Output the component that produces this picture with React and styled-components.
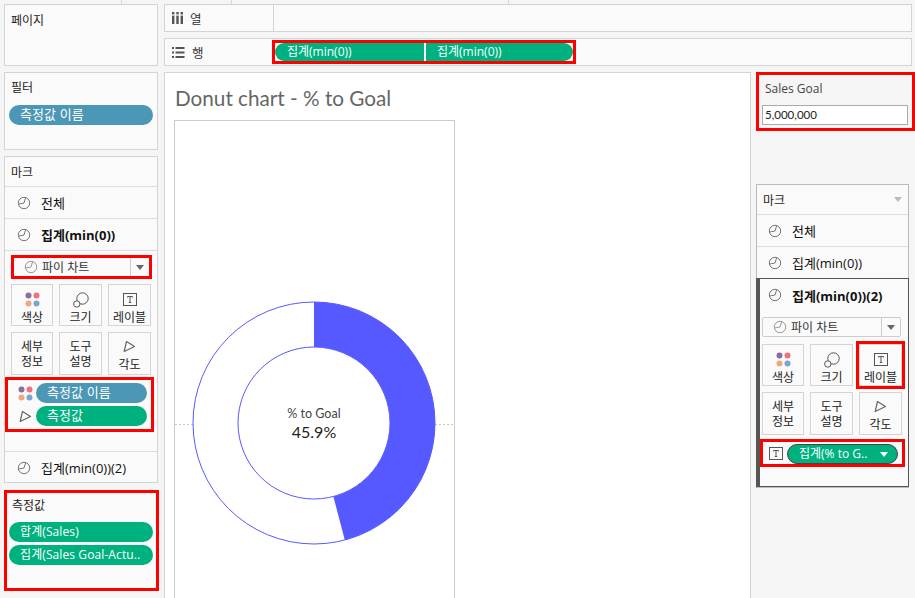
import React from 'react';
import styled, { createGlobalStyle } from 'styled-components';

const GlobalStyle = createGlobalStyle`
  html, body {
    margin: 0;
    height: 598px;
    overflow: hidden;
    background: #f5f5f5;
    font-family: "Open Sans", "Noto Sans CJK KR", sans-serif;
    color: #222;
  }
  * { box-sizing: border-box; }
`;

const Page = styled.div`
  width: 915px;
  height: 598px;
  overflow: hidden;
`;

const TopStrip = styled.div`
  height: 4px;
  display: grid;
  grid-template-columns: 122px 110px 277px 1fr;
`;

const Tick = styled.div`
  border-right: 1px solid #d9d9d9;
`;

const Workspace = styled.div`
  display: flex;
  gap: 5px;
  padding-left: 4px;
`;

const LeftColumn = styled.div`
  width: 155px;
  flex: none;
  display: flex;
  flex-direction: column;
`;

const Card = styled.div`
  width: 154px;
  background: #fafafa;
  border: 1px solid #d4d4d4;
  height: ${p => p.$height}px;
  margin-bottom: ${p => p.$gap || 0}px;
  padding: ${p => p.$padding || '0'};
`;

const MeasureCard = styled.div`
  background: #fafafa;
  border: 3px solid #f00;
  height: 101px;
  margin-top: 7px;
  padding: 5px 3px 0 2px;
`;

const CardTitle = styled.div`
  font-size: 12px;
  line-height: 16px;
  padding-left: ${p => p.$indent || 0}px;
  margin-bottom: ${p => p.$gap || 0}px;
`;

const Pill = styled.div`
  height: 20px;
  border-radius: 10px;
  background: ${p => (p.$blue ? '#4b97b5' : '#00b180')};
  color: #fff;
  font-size: ${p => (p.$korean ? 13 : 12)}px;
  line-height: 19px;
  padding-left: 11px;
  white-space: nowrap;
  overflow: hidden;
  margin-bottom: 3px;
  flex: 1;
  letter-spacing: 0.1px;
`;

const MarksHeader = styled.div`
  height: ${p => p.$height}px;
  padding: 0 6px;
  display: flex;
  align-items: center;
  justify-content: space-between;
  font-size: 12px;
`;

const Caret = styled.span`
  width: 0;
  height: 0;
  border-left: 4px solid transparent;
  border-right: 4px solid transparent;
  border-top: 5px solid ${p => p.$color || '#666'};
`;

const MarkRow = styled.div`
  height: 32px;
  border-top: ${p => (p.$flush ? 'none' : '1px solid #ddd')};
  display: flex;
  align-items: center;
  gap: 10px;
  padding-left: ${p => p.$inset || 12}px;
  font-size: 13px;
  font-weight: ${p => (p.$bold ? 700 : 400)};
  color: #111;
`;

const MarkBody = styled.div`
  border-top: 1px solid #ddd;
  padding: 4px 5px 0 6px;
`;

const SelectedBlock = styled.div`
  border: 1px solid #555;
  border-left-width: 4px;
  height: 209px;
  margin: 0 -1px -1px -1px;
`;

const SelectedBody = styled.div`
  padding: 6px 7px 0 2px;
`;

const SelectBox = styled.div`
  height: ${p => (p.$marked ? 24 : 20)}px;
  display: flex;
  align-items: center;
  background: #fafafa;
  border: ${p => (p.$marked ? '3px solid #f00' : '1px solid #ccc')};
  border-radius: ${p => (p.$marked ? 0 : 2)}px;
  font-size: 12px;
  color: #333;
`;

const SelectValue = styled.div`
  flex: 1;
  display: flex;
  align-items: center;
  gap: 4px;
  padding-left: 10px;
`;

const SelectArrow = styled.div`
  width: 19px;
  height: 100%;
  border-left: 1px solid #ccc;
  display: flex;
  align-items: center;
  justify-content: center;
`;

const ButtonGrid = styled.div`
  display: grid;
  grid-template-columns: 42px 43px 43px;
  grid-template-rows: 42px 43px;
  column-gap: 6px;
  row-gap: 6px;
  margin-top: ${p => p.$top}px;
`;

const MarkButton = styled.div`
  border: 1px solid #d4d4d4;
  outline: ${p => (p.$marked ? '3px solid #f00' : 'none')};
  display: flex;
  flex-direction: column;
  align-items: center;
  justify-content: ${p => (p.$center ? 'center' : 'flex-end')};
  padding-bottom: ${p => (p.$lift ? 2 : 0)}px;
  font-size: 12px;
  line-height: 15px;
  text-align: center;
  color: #222;
`;

const IconSlot = styled.div`
  height: 21px;
  display: flex;
  align-items: center;
  justify-content: center;
`;

const PillBox = styled.div`
  border: 3px solid #f00;
  margin: ${p => p.$margin};
  padding: ${p => p.$padding};
`;

const PillLine = styled.div`
  display: flex;
  align-items: center;
  gap: 2px;
`;

const LineIcon = styled.div`
  width: 18px;
  display: flex;
  justify-content: center;
  margin-bottom: ${p => (p.$flat ? 0 : 3)}px;
`;

const LabelPill = styled.div`
  flex: 1;
  height: 20px;
  border-radius: 10px;
  border: 1px solid #444;
  background: #00b180;
  color: #fff;
  font-size: 12px;
  line-height: 18px;
  padding: 0 9px 0 11px;
  display: flex;
  align-items: center;
  justify-content: space-between;
  white-space: nowrap;
`;

const MainColumn = styled.div`
  width: 751px;
  flex: none;
`;

const Shelf = styled.div`
  width: 748px;
  height: 28px;
  display: flex;
  background: #fafafa;
  border: 1px solid #d4d4d4;
  margin-bottom: 6px;
`;

const ShelfLabel = styled.div`
  width: 109px;
  border-right: 1px solid #d4d4d4;
  display: flex;
  align-items: center;
  gap: 7px;
  padding-left: 7px;
  font-size: 12.5px;
  color: #333;
`;

const ShelfPills = styled.div`
  display: flex;
  height: 24px;
  width: 304px;
  margin: 1px 0 0 -2px;
  border: 3px solid #f00;
  background: #fff;
`;

const ShelfPill = styled.div`
  flex: ${p => (p.$left ? '0 0 151px' : '1')};
  background: #00b180;
  color: #fff;
  font-size: 12px;
  line-height: 18px;
  padding-left: ${p => (p.$left ? 12 : 11)}px;
  border-radius: ${p => (p.$left ? '9px 0 0 9px' : '0 9px 9px 0')};
  border-right: ${p => (p.$left ? '2px solid #fff' : 'none')};
  white-space: nowrap;
`;

const Lower = styled.div`
  display: flex;
  gap: 5px;
`;

const ChartPanel = styled.div`
  width: 587px;
  flex: none;
  height: 530px;
  background: #fff;
  border: 1px solid #d4d4d4;
  padding-left: 9px;
  overflow: hidden;
`;

const ChartTitle = styled.div`
  font-family: "Lato", sans-serif;
  font-size: 20.7px;
  line-height: 28px;
  color: #666;
  padding: 11px 0 8px 1px;
`;

const ChartBox = styled.div`
  width: 281px;
  height: 500px;
  border: 1px solid #ccc;
`;

const RightColumn = styled.div`
  width: 159px;
  flex: none;
`;

const GoalBox = styled.div`
  height: 59px;
  border: 3px solid #f00;
  padding: 5px 3px 0 3px;
  margin-bottom: 53px;
`;

const GoalLabel = styled.div`
  font-size: 12px;
  line-height: 18px;
  color: #444;
  margin: 0 0 7px 3px;
`;

const GoalInput = styled.div`
  height: 20px;
  width: 146px;
  background: #fff;
  border: 1px solid #aaa;
  font-family: "Lato", sans-serif;
  font-size: 11.5px;
  line-height: 18px;
  padding-left: 2px;
  color: #222;
`;

const RightMarks = styled.div`
  width: 153px;
  height: 304px;
  border: 1px solid #bbb;
  background: #fafafa;
`;

const Spacer = styled.div`
  height: ${p => p.$height}px;
`;

const ClockIcon = ({ light }) => (
  <svg width="14" height="14" viewBox="0 0 14 14" fill="none" stroke={light ? '#999' : '#777'} strokeWidth="1">
    <circle cx="7" cy="7" r="5.7" />
    <path d="M7 7 L8.6 1.8 M7 7 L1.8 8" />
  </svg>
);

const DotsIcon = () => (
  <svg width="15" height="15" viewBox="0 0 15 15">
    <circle cx="3.5" cy="3.5" r="3" fill="#8a6f9e" />
    <circle cx="11.5" cy="3.5" r="3" fill="#f0707f" />
    <circle cx="3.5" cy="11.5" r="3" fill="#f3a67c" />
    <circle cx="11.5" cy="11.5" r="3" fill="#7fa3cf" />
  </svg>
);

const SizeIcon = () => (
  <svg width="16" height="16" viewBox="0 0 16 16" fill="none" stroke="#555" strokeWidth="1">
    <circle cx="9.5" cy="6.5" r="5.7" fill="#fafafa" />
    <circle cx="3.8" cy="12" r="3.2" fill="#fafafa" />
  </svg>
);

const TextIcon = () => (
  <svg width="14" height="14" viewBox="0 0 14 14" fill="none" stroke="#555" strokeWidth="1">
    <rect x="0.5" y="0.5" width="13" height="12" />
    <path d="M4.5 4.5 V3.5 H9.5 V4.5 M7 3.5 V9.5 M5.8 9.5 H8.2" />
  </svg>
);

const AngleIcon = () => (
  <svg width="13" height="13" viewBox="0 0 13 13" fill="none" stroke="#666" strokeWidth="1.2">
    <path d="M3.5 1.5 L11.5 6.5 L1.2 11.5 Z" strokeLinejoin="round" />
  </svg>
);

const ColumnsIcon = () => (
  <svg width="11" height="12" viewBox="0 0 11 12" fill="#555">
    <rect x="0" y="0" width="2.4" height="2.4" />
    <rect x="4.3" y="0" width="2.4" height="2.4" />
    <rect x="8.6" y="0" width="2.4" height="2.4" />
    <rect x="0" y="3.6" width="2.4" height="8.4" />
    <rect x="4.3" y="3.6" width="2.4" height="8.4" />
    <rect x="8.6" y="3.6" width="2.4" height="8.4" />
  </svg>
);

const RowsIcon = () => (
  <svg width="13" height="11" viewBox="0 0 13 11" fill="#555">
    <rect x="0" y="0" width="2" height="2" />
    <rect x="0" y="4.5" width="2" height="2" />
    <rect x="0" y="9" width="2" height="2" />
    <rect x="3.5" y="0" width="9" height="2" />
    <rect x="3.5" y="4.5" width="9" height="2" />
    <rect x="3.5" y="9" width="9" height="2" />
  </svg>
);

const polar = (cx, cy, r, pct) => {
  const a = (pct * 2 * Math.PI) / 100;
  return [cx + r * Math.sin(a), cy - r * Math.cos(a)];
};

const Donut = ({ pct }) => {
  const cx = 139;
  const cy = 302;
  const outer = 121;
  const inner = 76;
  const [ox, oy] = polar(cx, cy, outer, pct);
  const [ix, iy] = polar(cx, cy, inner, pct);
  return (
    <svg width="279" height="498" viewBox="0 0 279 498" style={{ display: 'block' }}>
      <line x1="0" y1="303.5" x2="279" y2="303.5" stroke="#c8c8c8" strokeDasharray="2 2" />
      <circle cx={cx} cy={cy} r={outer} fill="#fff" stroke="#5659ff" />
      <path
        d={`M${cx} ${cy - outer} A${outer} ${outer} 0 0 1 ${ox} ${oy} L${ix} ${iy} A${inner} ${inner} 0 0 0 ${cx} ${cy - inner} Z`}
        fill="#5659ff"
      />
      <circle cx={cx} cy={cy} r={inner} fill="#fff" stroke="#5659ff" />
      <text x={cx} y={297} textAnchor="middle" fontFamily="Lato, sans-serif" fontSize="12.5" fill="#444">% to Goal</text>
      <text x={cx} y={317} textAnchor="middle" fontFamily="Lato, sans-serif" fontSize="16" fill="#222">45.9%</text>
    </svg>
  );
};

const Buttons = ({ markLabel, top }) => (
  <ButtonGrid $top={top}>
    <MarkButton><IconSlot><DotsIcon /></IconSlot>색상</MarkButton>
    <MarkButton><IconSlot><SizeIcon /></IconSlot>크기</MarkButton>
    <MarkButton $marked={markLabel}><IconSlot><TextIcon /></IconSlot>레이블</MarkButton>
    <MarkButton $center>세부<br />정보</MarkButton>
    <MarkButton $center>도구<br />설명</MarkButton>
    <MarkButton $lift><IconSlot><AngleIcon /></IconSlot>각도</MarkButton>
  </ButtonGrid>
);

const PieSelect = ({ marked }) => (
  <SelectBox $marked={marked}>
    <SelectValue><ClockIcon light />파이 차트</SelectValue>
    <SelectArrow><Caret /></SelectArrow>
  </SelectBox>
);

export default function App() {
  return (
    <Page>
      <GlobalStyle />
      <TopStrip>
        <Tick />
        <Tick />
        <Tick />
      </TopStrip>
      <Workspace>
        <LeftColumn>
          <Card $height={62} $gap={6} $padding="8px 6px">
            <CardTitle>페이지</CardTitle>
          </Card>
          <Card $height={78} $gap={6} $padding="7px 4px">
            <CardTitle $gap={9} $indent={2}>필터</CardTitle>
            <Pill $blue $korean>측정값 이름</Pill>
          </Card>
          <Card $height={327}>
            <MarksHeader $height={29}>마크</MarksHeader>
            <MarkRow><ClockIcon />전체</MarkRow>
            <MarkRow $bold><ClockIcon />집계(min(0))</MarkRow>
            <MarkBody>
              <PieSelect marked />
              <Buttons top={5} />
            </MarkBody>
            <PillBox $margin="2px 3px 0 0" $padding="3px 4px 0 8px">
              <PillLine><LineIcon><DotsIcon /></LineIcon><Pill $blue $korean>측정값 이름</Pill></PillLine>
              <PillLine><LineIcon><AngleIcon /></LineIcon><Pill $korean>측정값</Pill></PillLine>
            </PillBox>
            <Spacer $height={19} />
            <MarkRow>
              <ClockIcon />집계(min(0))(2)
            </MarkRow>
          </Card>
          <MeasureCard>
            <CardTitle $gap={8} $indent={3}>측정값</CardTitle>
            <Pill>합계(Sales)</Pill>
            <Pill>집계(Sales Goal-Actu..</Pill>
          </MeasureCard>
        </LeftColumn>
        <MainColumn>
          <Shelf>
            <ShelfLabel><ColumnsIcon />열</ShelfLabel>
          </Shelf>
          <Shelf>
            <ShelfLabel><RowsIcon />행</ShelfLabel>
            <ShelfPills>
              <ShelfPill $left>집계(min(0))</ShelfPill>
              <ShelfPill>집계(min(0))</ShelfPill>
            </ShelfPills>
          </Shelf>
          <Lower>
            <ChartPanel>
              <ChartTitle>Donut chart - % to Goal</ChartTitle>
              <ChartBox><Donut pct={45.9} /></ChartBox>
            </ChartPanel>
            <RightColumn>
              <GoalBox>
                <GoalLabel>Sales Goal</GoalLabel>
                <GoalInput>5,000,000</GoalInput>
              </GoalBox>
              <RightMarks>
                <MarksHeader $height={29}>마크<Caret $color="#bbb" /></MarksHeader>
                <MarkRow $inset={11}><ClockIcon />전체</MarkRow>
                <MarkRow $inset={11}><ClockIcon />집계(min(0))</MarkRow>
                <SelectedBlock>
                  <MarkRow $bold $flush $inset={8}>
                    <ClockIcon />집계(min(0))(2)
                  </MarkRow>
                  <SelectedBody>
                    <PieSelect />
                    <Buttons markLabel top={7} />
                    <PillBox $margin="4px -4px 0 -2px" $padding="2px 4px 0 4px">
                      <PillLine>
                        <LineIcon $flat><TextIcon /></LineIcon>
                        <LabelPill>집계(% to G..<Caret $color="#fff" /></LabelPill>
                      </PillLine>
                    </PillBox>
                  </SelectedBody>
                </SelectedBlock>
              </RightMarks>
            </RightColumn>
          </Lower>
        </MainColumn>
      </Workspace>
    </Page>
  );
}
